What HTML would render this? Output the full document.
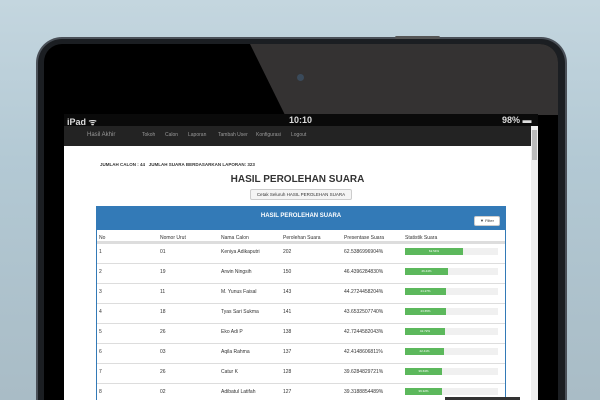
<!DOCTYPE html>
<html><head><style>
*{margin:0;padding:0;box-sizing:border-box}
html,body{width:600px;height:400px;overflow:hidden}
body{position:relative;font-family:"Liberation Sans",sans-serif;background:linear-gradient(180deg,#c4d6df 0%,#b3c9d4 40%,#a9bcc6 100%)}
.bz{position:absolute;left:36px;top:37px;width:531px;height:363px;border-radius:26px 26px 0 0;background:#1b1e22;border:2px solid #4a5058;border-bottom:none}
.scr{position:absolute;left:44px;top:44px;width:514px;height:356px;border-radius:18px 18px 0 0;background:#000;overflow:hidden}
.gl{position:absolute;left:206px;top:0;width:308px;height:71px;background:#343232;clip-path:polygon(0 0,100% 0,100% 100%,35px 100%)}
.cam{position:absolute;left:297px;top:74px;width:7px;height:7px;border-radius:50%;background:#3a4a5a}
.sb{position:absolute;left:64px;top:114px;width:474px;height:12px;background:#0a0a0a;color:#ddd;font-size:9px;font-weight:bold}
.nav{position:absolute;left:64px;top:126px;width:474px;height:20px;background:#232323;color:#999;font-size:5px}
.nav span{position:absolute;top:6px}
.pg{position:absolute;left:64px;top:146px;width:467px;height:254px;background:#fff;color:#333;font-size:5px;overflow:hidden}
.scrl{position:absolute;left:531px;top:126px;width:7px;height:274px;background:#eee}
.scrl div{position:absolute;left:1px;top:4px;width:5px;height:30px;background:#bbb}
.pn{position:absolute;left:32px;top:60px;width:410px;height:200px;border:1px solid #337ab7;border-top:none}
.ph{height:24px;background:#337ab7;color:#fff;font-weight:bold;font-size:6px;text-align:center;line-height:20px}
.r{position:absolute;left:0;width:408px;height:20px;border-top:1px solid #ddd}
.r span{position:absolute;top:5px}
.pb{position:absolute;left:308px;top:4px;width:93px;height:7px;background:#f0f0f0}
.pb div{height:7px;background:#5cb85c;color:#fff;font-size:3px;text-align:center;line-height:7px}
</style></head><body>
<div class="bz"></div>
<div class="scr"><div class="gl"></div></div>
<div class="cam"></div>
<div style="position:absolute;left:395px;top:36px;width:45px;height:3px;background:#555;border-radius:2px"></div>
<div class="sb"><span style="position:absolute;left:3px;top:1px">iPad ᯤ</span><span style="position:absolute;left:225px;top:1px">10:10</span><span style="position:absolute;left:438px;top:1px">98% ▬</span></div>
<div class="nav"><span style="left:23px;font-size:6px;top:6px">Hasil Akhir</span><span style="left:78px">Tokoh</span><span style="left:101px">Calon</span><span style="left:124px">Laporan</span><span style="left:154px">Tambah User</span><span style="left:192px">Konfigurasi</span><span style="left:227px">Logout</span></div>
<div class="pg">
<div style="position:absolute;left:36px;top:16px;font-weight:bold;font-size:4.5px">JUMLAH CALON : 44 &nbsp; JUMLAH SUARA BERDASARKAN LAPORAN: 323</div>
<div style="position:absolute;left:0;width:467px;top:28px;text-align:center;font-size:10px;font-weight:bold">HASIL PEROLEHAN SUARA</div>
<div style="position:absolute;left:186px;top:43px;width:102px;height:11px;border:1px solid #ccc;background:#f4f4f4;border-radius:2px;font-size:4.5px;text-align:center;line-height:9px">Cetak Seluruh HASIL PEROLEHAN SUARA</div>
<div class="pn"><div class="ph">HASIL PEROLEHAN SUARA</div>
<div style="position:absolute;right:5px;top:10px;width:26px;height:10px;background:#fff;border:1px solid #ccc;border-radius:2px;font-size:4px;text-align:center;line-height:8px">▼ Filter</div>
<div class="r" style="top:24px;border:none"><span style="left:2px">No</span><span style="left:63px">Nomor Urut</span><span style="left:124px">Nama Calon</span><span style="left:186px">Perolehan Suara</span><span style="left:247px">Presentase Suara</span><span style="left:308px">Statistik Suara</span></div>
<div class="r" style="top:35px;height:1px;border-top:2px solid #ddd"></div>
<div class="r" style="top:37px"><span style="left:2px">1</span><span style="left:63px">01</span><span style="left:124px">Keniya Adikaputri</span><span style="left:186px">202</span><span style="left:247px">62.5386996904%</span><div class="pb"><div style="width:58px">62.54%</div></div></div>
<div class="r" style="top:57px"><span style="left:2px">2</span><span style="left:63px">19</span><span style="left:124px">Arwin Ningsih</span><span style="left:186px">150</span><span style="left:247px">46.4396284830%</span><div class="pb"><div style="width:43px">46.44%</div></div></div>
<div class="r" style="top:77px"><span style="left:2px">3</span><span style="left:63px">11</span><span style="left:124px">M. Yunus Faisal</span><span style="left:186px">143</span><span style="left:247px">44.2724458204%</span><div class="pb"><div style="width:41px">44.27%</div></div></div>
<div class="r" style="top:97px"><span style="left:2px">4</span><span style="left:63px">18</span><span style="left:124px">Tyas Sari Sukma</span><span style="left:186px">141</span><span style="left:247px">43.6532507740%</span><div class="pb"><div style="width:41px">43.65%</div></div></div>
<div class="r" style="top:117px"><span style="left:2px">5</span><span style="left:63px">26</span><span style="left:124px">Eko Adi P</span><span style="left:186px">138</span><span style="left:247px">42.7244582043%</span><div class="pb"><div style="width:40px">42.72%</div></div></div>
<div class="r" style="top:137px"><span style="left:2px">6</span><span style="left:63px">03</span><span style="left:124px">Aqila Rahma</span><span style="left:186px">137</span><span style="left:247px">42.4148606811%</span><div class="pb"><div style="width:39px">42.41%</div></div></div>
<div class="r" style="top:157px"><span style="left:2px">7</span><span style="left:63px">26</span><span style="left:124px">Catur K</span><span style="left:186px">128</span><span style="left:247px">39.6284829721%</span><div class="pb"><div style="width:37px">39.63%</div></div></div>
<div class="r" style="top:177px"><span style="left:2px">8</span><span style="left:63px">02</span><span style="left:124px">Adibatul Latifah</span><span style="left:186px">127</span><span style="left:247px">39.3188854489%</span><div class="pb"><div style="width:37px">39.32%</div></div></div>
</div>
</div>
<div class="scrl"><div></div></div>
<div style="position:absolute;left:445px;top:397px;width:75px;height:3px;background:#333"></div>
</body></html>
